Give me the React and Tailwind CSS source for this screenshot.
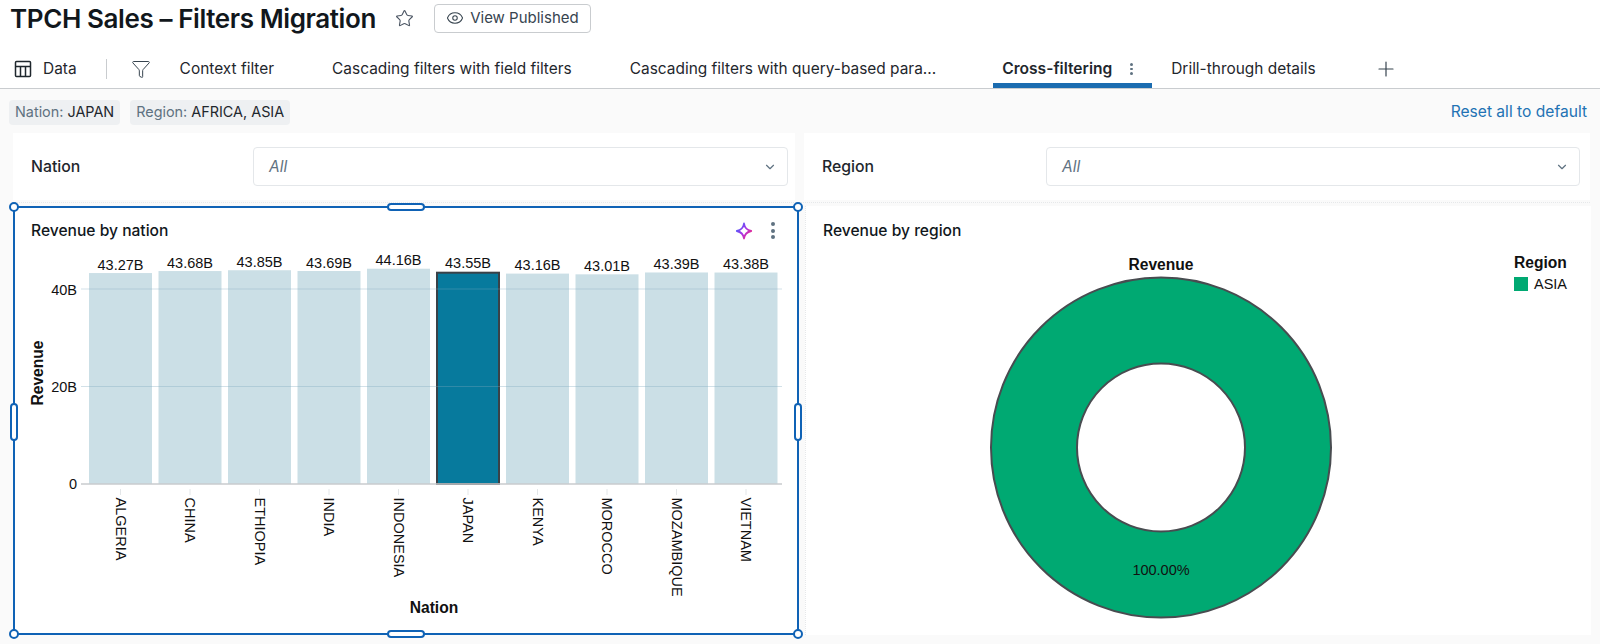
import { ChevronDown, Eye, Filter, Plus, Star } from 'lucide-react'

const NATIONS = [
  ['ALGERIA', 43.27],
  ['CHINA', 43.68],
  ['ETHIOPIA', 43.85],
  ['INDIA', 43.69],
  ['INDONESIA', 44.16],
  ['JAPAN', 43.55],
  ['KENYA', 43.16],
  ['MOROCCO', 43.01],
  ['MOZAMBIQUE', 43.39],
  ['VIETNAM', 43.38],
]

const CHART_FONT = { fontFamily: '"Liberation Sans", Arial, sans-serif' }

const FilterCard = ({ label, labelWidth, className }) => (
  <div className={`flex items-center bg-white h-[67px] ${className}`}>
    <span className={`${labelWidth} shrink-0 pl-[18px] text-[15.8px] font-medium text-[#1f272d]`}>{label}</span>
    <div className="flex-1 h-[39px] flex items-center justify-between pl-[15px] pr-[10px] bg-white border border-[#e4e7ea] rounded">
      <span className="text-[15.5px] italic text-[#5f7281]">All</span>
      <ChevronDown size={14} strokeWidth={2} className="text-[#5f7281]" />
    </div>
  </div>
)

const BarChart = () => (
  <svg viewBox="15 248 782 385" className="block w-[782px] h-[385px]" style={CHART_FONT}>
    {NATIONS.map(([name, value], i) => {
      const x = 89 + i * 69.5
      const top = 484 - value * 4.875
      const selected = name === 'JAPAN'
      return (
        <g key={name}>
          {selected ? (
            <rect x={x + 0.5} y={top + 1} width={62} height={484 - top - 1} fill="#077a9d" stroke="#3a4248" strokeWidth="2" />
          ) : (
            <rect x={x} y={top} width={63} height={484 - top} fill="#cbdfe6" />
          )}
          <text x={x + 31.5} y={top - 3.5} textAnchor="middle" fontSize="14.5" fill="#111">
            {value.toFixed(2)}B
          </text>
          <line x1={x + 31.5} x2={x + 31.5} y1="489" y2="495" stroke="#e3e6e8" />
          <text transform={`translate(${x + 26.5} 497.5) rotate(90)`} fontSize="14.5" fill="#111">
            {name}
          </text>
        </g>
      )
    })}
    <line x1="81" x2="782" y1="289" y2="289" stroke="#7fa8bd" strokeOpacity="0.35" />
    <line x1="81" x2="782" y1="386.5" y2="386.5" stroke="#7fa8bd" strokeOpacity="0.35" />
    <line x1="81" x2="782" y1="484" y2="484" stroke="#c8cbce" strokeWidth="1.5" />
    <text x="77" y="295" textAnchor="end" fontSize="14.5" fill="#111">40B</text>
    <text x="77" y="392" textAnchor="end" fontSize="14.5" fill="#111">20B</text>
    <text x="77" y="489" textAnchor="end" fontSize="14.5" fill="#111">0</text>
    <text transform="translate(43 373) rotate(-90)" textAnchor="middle" fontSize="15.6" fontWeight="700" fill="#111">Revenue</text>
    <text x="434" y="613" textAnchor="middle" fontSize="15.6" fontWeight="700" fill="#111">Nation</text>
  </svg>
)

const DonutChart = () => (
  <svg viewBox="806 248 785 385" className="block w-[785px] h-[385px]" style={CHART_FONT}>
    <text x="1161" y="270" textAnchor="middle" fontSize="15.6" fontWeight="700" fill="#111">Revenue</text>
    <circle cx="1161" cy="447.5" r="127" fill="none" stroke="#00a972" strokeWidth="86" />
    <circle cx="1161" cy="447.5" r="170" fill="none" stroke="#484c50" strokeWidth="2" />
    <circle cx="1161" cy="447.5" r="84" fill="white" stroke="#484c50" strokeWidth="2" />
    <text x="1161" y="575" textAnchor="middle" fontSize="14.5" fill="#111">100.00%</text>
    <text x="1514" y="268" fontSize="15.6" fontWeight="700" fill="#111">Region</text>
    <rect x="1514" y="277" width="14" height="14" fill="#00a972" />
    <text x="1534" y="288.5" fontSize="14.5" fill="#111">ASIA</text>
  </svg>
)

const Sparkle = () => (
  <svg width="18" height="18" viewBox="0 0 18 18" fill="none">
    <defs>
      <linearGradient id="spark" x1="1" y1="3" x2="17" y2="15" gradientUnits="userSpaceOnUse">
        <stop stopColor="#2f6bff" />
        <stop offset="0.5" stopColor="#a833e8" />
        <stop offset="1" stopColor="#ff2a6d" />
      </linearGradient>
    </defs>
    <path
      d="M9 1.5C9.6 5.8 11.6 8 16.2 9C11.6 10 9.6 12.2 9 16.5C8.4 12.2 6.4 10 1.8 9C6.4 8 8.4 5.8 9 1.5Z"
      stroke="url(#spark)"
      strokeWidth="1.8"
      strokeLinejoin="round"
    />
  </svg>
)

const Kebab = ({ gap, size, color }) => (
  <div className={`flex flex-col items-center ${gap}`}>
    <span className={`rounded-full ${size} ${color}`} />
    <span className={`rounded-full ${size} ${color}`} />
    <span className={`rounded-full ${size} ${color}`} />
  </div>
)

const Corner = ({ className }) => (
  <span className={`absolute w-[10px] h-[10px] rounded-full bg-white border-2 border-[#0f62b5] ${className}`} />
)

export default function App() {
  return (
    <div className="w-[1600px] h-[644px] overflow-hidden bg-[#fafafa] font-['Inter',sans-serif] text-[#1f272d]">
      <header className="bg-white h-[89px] border-b border-[#c9cccf]">
        <div className="flex items-center h-[36px] pl-[10px]">
          <h1 className="text-[26px] font-semibold tracking-[-0.4px] text-[#11171c] whitespace-nowrap">TPCH Sales – Filters Migration</h1>
          <Star size={19} strokeWidth={1.4} className="ml-[19px] text-[#4b5563]" />
          <button className="ml-[20px] h-[29px] w-[157px] flex items-center justify-center gap-[6px] border border-[#c9cccf] rounded text-[15px] text-[#37444f]">
            <Eye size={18} strokeWidth={1.4} />
            View Published
          </button>
        </div>
        <nav className="flex items-center h-[52px] pt-[14px] text-[15.45px] text-[#1f272d] whitespace-nowrap">
          <svg width="18" height="18" viewBox="0 0 18 18" fill="none" stroke="#1f272d" strokeWidth="1.5" className="ml-[14px]">
            <rect x="1.5" y="1.5" width="15" height="15" rx="1" />
            <path d="M1.5 6.5H16.5M6.5 6.5V16.5M11.5 6.5V16.5" />
          </svg>
          <span className="ml-[11px]">Data</span>
          <span className="ml-[29px] w-px h-[20px] bg-[#c9cccf]" />
          <Filter size={20} strokeWidth={1.2} className="ml-[24px] text-[#37444f]" />
          <span className="ml-[29px]">Context filter</span>
          <span className="ml-[58px]">Cascading filters with field filters</span>
          <span className="ml-[58px]">Cascading filters with query-based para...</span>
          <div className="ml-[57px] w-[159px] h-[38px] flex items-center pl-[9px] pt-[5px] border-b-[5px] border-[#1b6cb0]">
            <span className="font-semibold text-[15.6px]">Cross-filtering</span>
            <div className="ml-[18px]">
              <Kebab gap="gap-[2px]" size="w-[2.5px] h-[2.5px]" color="bg-[#5f7281]" />
            </div>
          </div>
          <span className="ml-[19px]">Drill-through details</span>
          <Plus size={24} strokeWidth={1.2} className="ml-[58px] text-[#37444f]" />
        </nav>
      </header>

      <div className="flex items-center justify-between h-[44px] pt-[2px] pl-[9px] pr-[13px]">
        <div className="flex gap-[10px] text-[14.4px]">
          <span className="h-[25px] px-[6px] flex items-center rounded bg-[#eef0f2]">
            <span className="text-[#5f7281]">Nation:</span>&nbsp;JAPAN
          </span>
          <span className="h-[25px] px-[6px] flex items-center rounded bg-[#eef0f2]">
            <span className="text-[#5f7281]">Region:</span>&nbsp;AFRICA, ASIA
          </span>
        </div>
        <a className="text-[15.6px] text-[#2272b4]">Reset all to default</a>
      </div>

      <div className="flex gap-[9px] pl-[13px] pr-[10px]">
        <FilterCard label="Nation" labelWidth="w-[240px]" className="w-[782px] pr-[7px]" />
        <FilterCard label="Region" labelWidth="w-[242px]" className="w-[786px] pr-[10px]" />
      </div>

      <div className="flex gap-[6px] ml-[13px] mr-[10px] mt-[2px] pt-[3px] border-t border-dotted border-[#e6e8ea]">
        <section className="relative w-[786px] h-[429px] bg-white border-2 border-[#0f62b5]">
          <div className="flex items-center h-[40px] pl-[16px] pr-[22px] pt-[5px]">
            <span className="text-[15.6px] font-medium text-[#11171c]">Revenue by nation</span>
            <div className="ml-auto flex items-center gap-[18px]">
              <Sparkle />
              <Kebab gap="gap-[2.5px]" size="w-[4px] h-[4px]" color="bg-[#5f7281]" />
            </div>
          </div>
          <BarChart />
          <Corner className="-left-[6px] -top-[6px]" />
          <Corner className="-right-[6px] -top-[6px]" />
          <Corner className="-left-[6px] -bottom-[6px]" />
          <Corner className="-right-[6px] -bottom-[6px]" />
          <span className="absolute left-[372px] -top-[5px] w-[38px] h-[8px] rounded-full bg-white border-2 border-[#0f62b5]" />
          <span className="absolute left-[372px] -bottom-[5px] w-[38px] h-[8px] rounded-full bg-white border-2 border-[#0f62b5]" />
          <span className="absolute -left-[5px] top-[195px] w-[8px] h-[38px] rounded-full bg-white border-2 border-[#0f62b5]" />
          <span className="absolute -right-[5px] top-[195px] w-[8px] h-[38px] rounded-full bg-white border-2 border-[#0f62b5]" />
        </section>
        <section className="w-[786px] h-[429px] bg-white pt-[2px] border-l border-dotted border-[#e6e8ea]">
          <div className="flex items-center h-[40px] pl-[17px] pt-[5px]">
            <span className="text-[15.6px] font-medium text-[#11171c]">Revenue by region</span>
          </div>
          <DonutChart />
        </section>
      </div>
    </div>
  )
}
